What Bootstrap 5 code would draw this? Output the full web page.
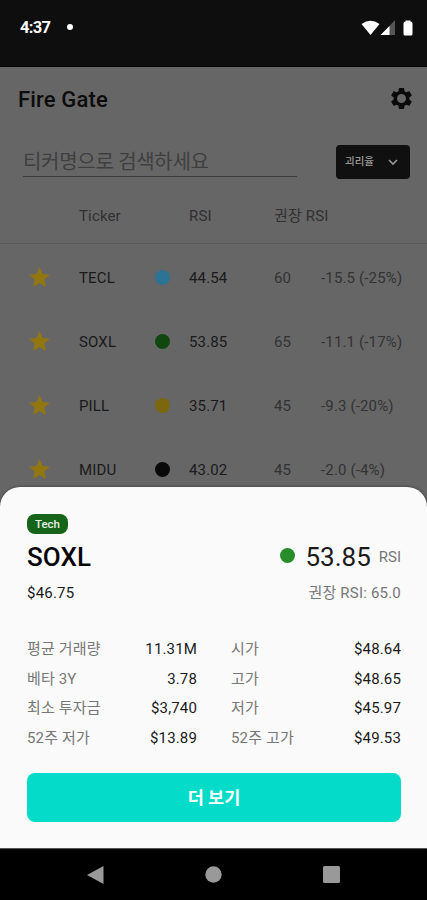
<!DOCTYPE html>
<html lang="ko">
<head>
<meta charset="utf-8">
<meta name="viewport" content="width=device-width, initial-scale=1">
<title>Fire Gate</title>
<link href="https://cdn.jsdelivr.net/npm/bootstrap@5.3.0/dist/css/bootstrap.min.css" rel="stylesheet">
<style>
body{font-family:Roboto,"Noto Sans CJK KR",sans-serif;font-size:15px;line-height:20px;background:#000;color:#1a1a1a}
svg{display:block;flex:none}
.phone{width:427px;height:900px}
.status{height:67px;background:#0e0e0e;padding:0 14px 11px 20px;font-size:16.5px;letter-spacing:-.7px;margin-bottom:1px}
.notice-dot{width:6px;height:6px;margin:-2px 0 0 17px}
.backdrop{height:438px;background:#666;flex:none}
.appbar{height:64px;padding:0 15px 0 18px}
.brand{font-size:22px;font-weight:500;letter-spacing:.15px;color:#0c0c0c;padding-top:2px}
.gear{margin-top:-2px}
.search-row{height:60px;padding:13px 18px 0 23px}
.search-field{width:274px;height:33px;border-bottom:1px solid #3c3c3c;font-size:20px;line-height:36px;letter-spacing:-.3px;color:#3f3f3f;white-space:nowrap}
.sort{width:74px;height:34px;margin:1px -1px 0 0;background:#101010;border-radius:4px;color:#999;font-size:10.5px;font-weight:500;padding:0 11px 0 9px}
.tick-row{display:grid;grid-template-columns:50px 76px 34px 85px 47px 1fr;align-items:center;height:64.2px;padding:2px 0 0 29px;white-space:nowrap;letter-spacing:.15px}
.tick-head{height:53px;border-bottom:1px solid #595959;color:#303030;padding-bottom:5px}
.star{fill:#92760f;margin-top:-2px}
.soft{color:#333}
.dot{width:15px;height:15px;border-radius:50%;flex:none;margin-top:-1px}
.blue{background:#2d7494}.green{background:#10470f}.gold{background:#7c670d}.black{background:#090909}
.sheet{height:361px;margin-top:-18px;background:#fafafa;border-radius:20px 20px 0 0;padding:27px 26px 26px 27px;box-shadow:0 0 3px #333}
.tag{height:20px;width:41px;border-radius:8px;background:#16641a;color:#e4f2e4;font-size:11.5px;font-weight:500}
.symbol{font-size:26px;font-weight:500;line-height:30px;letter-spacing:.1px;color:#060606}
.score{font-size:26px;line-height:30px}
.live{background:#278d2b;margin:-3px 10px 0 0}
.muted{color:#777}
.price-row{margin-top:11px;letter-spacing:.2px}
.stats{display:grid;grid-template-columns:170px 170px;justify-content:space-between;row-gap:9.500px;margin-top:36px;letter-spacing:.15px}
.more{height:49px;background:#04dcc9;border-radius:8px;color:#fff;font-size:17.5px;font-weight:700}
.more:hover{background:#04dcc9;color:#fff}
.sysnav{height:52px;border-top:1px solid #555;padding:0 87px 0 86px}
</style>
</head>
<body>
<div class="phone d-flex flex-column overflow-hidden">
  <header class="status d-flex align-items-center text-white fw-bold">
    <span>4:37</span><span class="notice-dot bg-white rounded-circle"></span>
    <div class="d-flex align-items-center ms-auto">
      <svg width="19" height="15" viewBox="0 0 19 15"><path fill="#fff" d="M.5 4Q9.5-2.5 18.500 4L9.500 15Z"/></svg>
      <svg width="15" height="15" viewBox="0 0 15 15"><path fill="#555" d="M15 0V15H1Z"/><path fill="#fff" d="M9.500 6V15H.5Z"/></svg>
      <svg width="10" height="16" viewBox="0 0 10 16" class="ms-2"><path fill="#fff" d="M2.500 1.500V.5H7.500V1.500Q9.500 1.500 9.500 3.500V14Q9.500 15.500 8 15.500H2Q.5 15.500 .5 14V3.500Q.5 1.500 2.500 1.500Z"/></svg>
    </div>
  </header>

  <main class="backdrop">
    <div class="appbar d-flex align-items-center justify-content-between">
      <span class="brand">Fire Gate</span>
      <svg class="gear" width="21" height="21" viewBox="2 2 20 20"><path fill="#0a0a0a" fill-rule="evenodd" d="M19.430 12.980c.04-.32.07-.64.07-.98s-.03-.66-.07-.98l2.110-1.650c.19-.15.24-.42.12-.64l-2-3.460c-.12-.22-.39-.3-.61-.22l-2.490 1c-.52-.4-1.080-.73-1.690-.98l-.38-2.650C14.460 2.180 14.250 2 14 2h-4c-.25 0-.46.18-.49.42l-.38 2.650c-.61.25-1.170.59-1.690.98l-2.490-1c-.23-.09-.49 0-.61.22l-2 3.460c-.13.22-.07.49.12.64l2.110 1.650c-.04.32-.07.65-.07.98s.03.66.07.98l-2.110 1.650c-.19.15-.24.42-.12.64l2 3.460c.12.22.39.3.61.22l2.490-1c.52.4 1.080.73 1.690.98l.38 2.650c.03.24.24.42.49.42h4c.25 0 .46-.18.49-.42l.38-2.650c.61-.25 1.170-.59 1.690-.98l2.490 1c.23.09.49 0 .61-.22l2-3.460c.12-.22.07-.49-.12-.64zM12 16.300a4.300 4.300 0 1 1 0-8.600 4.300 4.300 0 0 1 0 8.600z"/></svg>
    </div>
    <div class="search-row d-flex justify-content-between">
      <div class="search-field">티커명으로 검색하세요</div>
      <div class="sort d-flex align-items-center justify-content-between">
        <span>괴리율</span>
        <svg width="12" height="8" viewBox="0 0 12 8"><path d="M2 2l4 4 4-4" fill="none" stroke="#999" stroke-width="1.600"/></svg>
      </div>
    </div>
    <div class="tick-row tick-head"><span></span><span>Ticker</span><span></span><span>RSI</span><span>권장 RSI</span><span></span></div>
    <div class="tick-row">
      <svg class="star" width="21" height="20" viewBox="2 2 20 19"><path d="M12 17.270 18.180 21l-1.640-7.030L22 9.240l-7.190-.61L12 2 9.190 8.630 2 9.240l5.460 4.730L5.820 21z"/></svg>
      <span>TECL</span><span class="dot blue"></span><span>44.54</span><span class="soft">60</span><span class="soft">-15.5 (-25%)</span>
    </div>
    <div class="tick-row">
      <svg class="star" width="21" height="20" viewBox="2 2 20 19"><path d="M12 17.270 18.180 21l-1.640-7.030L22 9.240l-7.190-.61L12 2 9.190 8.630 2 9.240l5.460 4.730L5.820 21z"/></svg>
      <span>SOXL</span><span class="dot green"></span><span>53.85</span><span class="soft">65</span><span class="soft">-11.1 (-17%)</span>
    </div>
    <div class="tick-row">
      <svg class="star" width="21" height="20" viewBox="2 2 20 19"><path d="M12 17.270 18.180 21l-1.640-7.030L22 9.240l-7.190-.61L12 2 9.190 8.630 2 9.240l5.460 4.730L5.820 21z"/></svg>
      <span>PILL</span><span class="dot gold"></span><span>35.71</span><span class="soft">45</span><span class="soft">-9.3 (-20%)</span>
    </div>
    <div class="tick-row">
      <svg class="star" width="21" height="20" viewBox="2 2 20 19"><path d="M12 17.270 18.180 21l-1.640-7.030L22 9.240l-7.190-.61L12 2 9.190 8.630 2 9.240l5.460 4.730L5.820 21z"/></svg>
      <span>MIDU</span><span class="dot black"></span><span>43.02</span><span class="soft">45</span><span class="soft">-2.0 (-4%)</span>
    </div>
  </main>

  <section class="sheet d-flex flex-column position-relative flex-shrink-0">
    <div class="tag d-flex align-items-center justify-content-center">Tech</div>
    <div class="d-flex align-items-center justify-content-between mt-2">
      <span class="symbol">SOXL</span>
      <div class="d-flex align-items-center"><span class="dot live"></span><span class="score">53.85</span><span class="muted ms-2">RSI</span></div>
    </div>
    <div class="price-row d-flex justify-content-between"><span>$46.75</span><span class="muted">권장 RSI: 65.0</span></div>
    <div class="stats">
      <div class="d-flex justify-content-between"><span class="muted">평균 거래량</span><span>11.31M</span></div>
      <div class="d-flex justify-content-between"><span class="muted">시가</span><span>$48.64</span></div>
      <div class="d-flex justify-content-between"><span class="muted">베타 3Y</span><span>3.78</span></div>
      <div class="d-flex justify-content-between"><span class="muted">고가</span><span>$48.65</span></div>
      <div class="d-flex justify-content-between"><span class="muted">최소 투자금</span><span>$3,740</span></div>
      <div class="d-flex justify-content-between"><span class="muted">저가</span><span>$45.97</span></div>
      <div class="d-flex justify-content-between"><span class="muted">52주 저가</span><span>$13.89</span></div>
      <div class="d-flex justify-content-between"><span class="muted">52주 고가</span><span>$49.53</span></div>
    </div>
    <button type="button" class="btn more w-100 mt-auto border-0 p-0">더 보기</button>
  </section>

  <nav class="sysnav d-flex align-items-center justify-content-between position-relative">
    <svg width="18" height="18" viewBox="0 0 18 18"><path fill="#999" d="M1 9 17.500 0V18Z"/></svg>
    <svg width="17" height="17" viewBox="0 0 17 17"><circle cx="8.500" cy="8.500" r="8.200" fill="#999"/></svg>
    <svg width="17" height="17" viewBox="0 0 17 17"><rect width="17" height="17" rx="1.500" fill="#999"/></svg>
  </nav>
</div>
<script src="https://cdn.jsdelivr.net/npm/bootstrap@5.3.0/dist/js/bootstrap.bundle.min.js"></script>
</body>
</html>
